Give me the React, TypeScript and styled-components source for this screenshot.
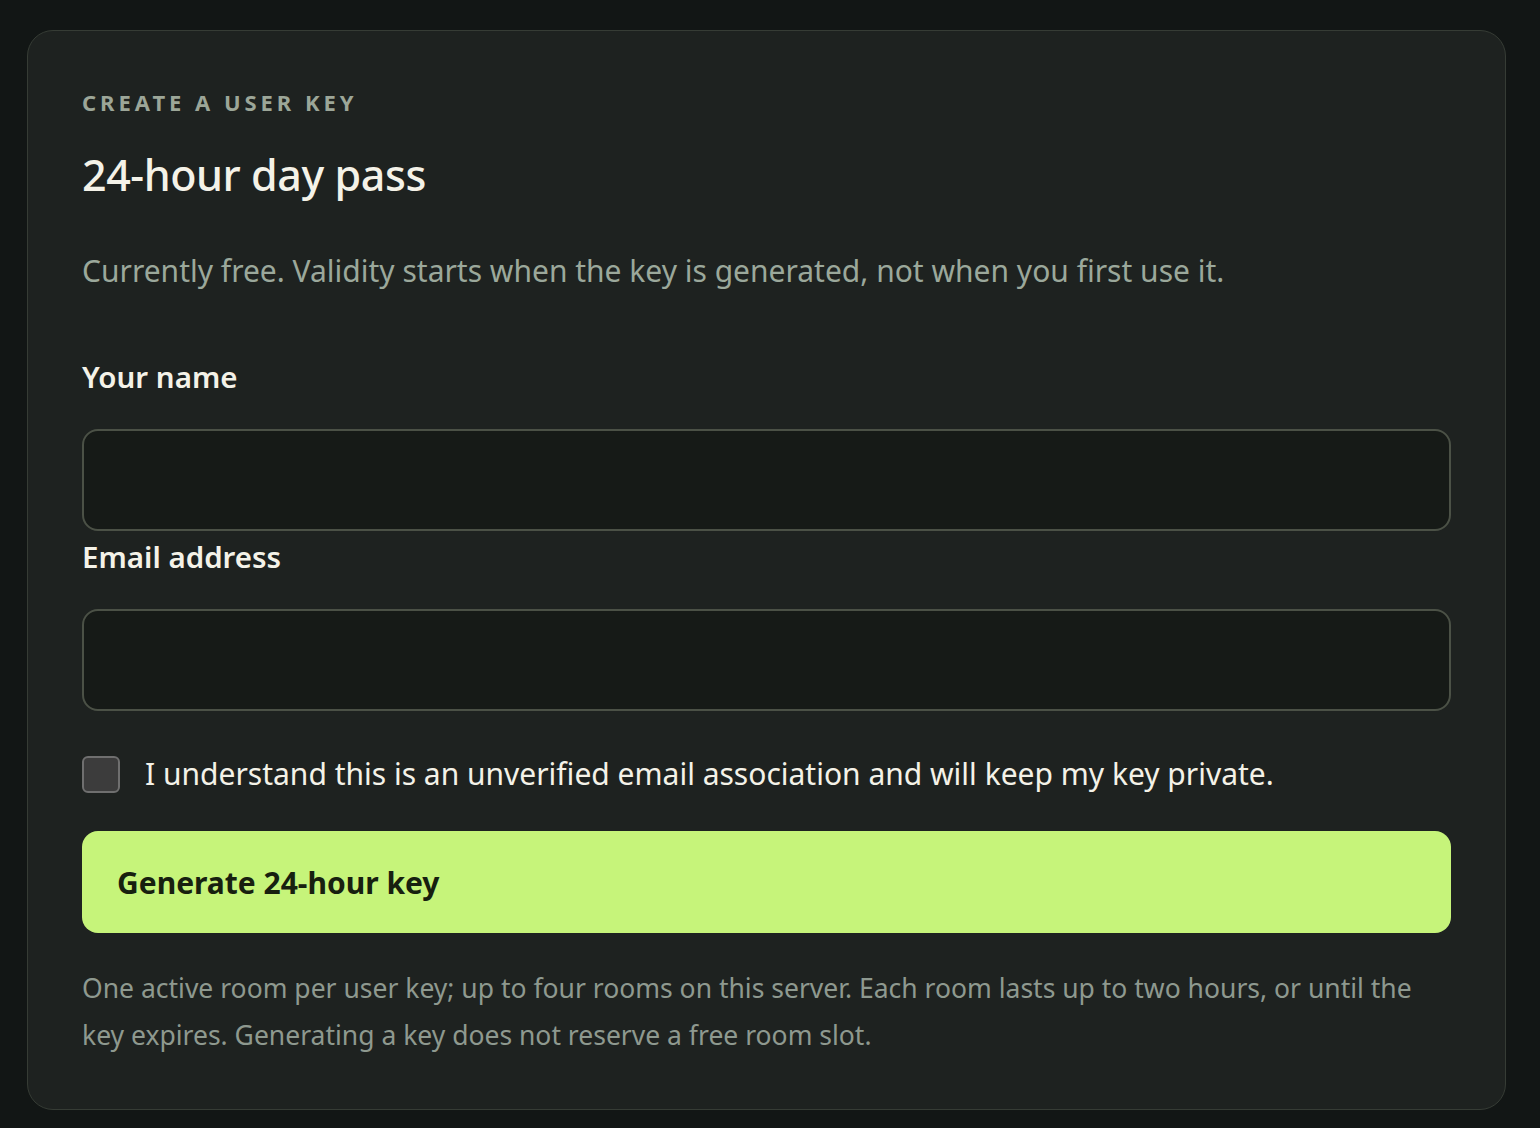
import React from "react";
import styled, { createGlobalStyle } from "styled-components";

const Global = createGlobalStyle`
  html, body { margin: 0; padding: 0; background: #121615; }
  body { font-family: "Noto Sans", "Open Sans", sans-serif; }
  * { box-sizing: border-box; }
`;

const Page = styled.main`
  min-height: 1128px;
  padding: 30px 34px 18px 27px;
  background: #121615;
`;

const Card = styled.section`
  width: 1479px;
  background: #1e2220;
  border: 1.5px solid #363c35;
  border-radius: 26px;
  padding: 57px 54px 50px 54px;
  display: flex;
  flex-direction: column;
`;

const Eyebrow = styled.p`
  margin: 0;
  font-size: 22px;
  line-height: 28px;
  font-weight: 700;
  letter-spacing: 0.18em;
  text-transform: uppercase;
  color: #9ca698;
`;

const Title = styled.h1`
  margin: 33px 0 0;
  font-size: 43px;
  line-height: 52px;
  font-weight: 500;
  color: #f4f2e8;
  letter-spacing: -0.01em;
`;

const Lead = styled.p`
  margin: 50px 0 0;
  font-size: 30px;
  line-height: 40px;
  color: #9ba89b;
`;

const Fields = styled.div`
  margin-top: 66px;
  display: flex;
  flex-direction: column;
  gap: 6px;
`;

const Field = styled.label`
  display: flex;
  flex-direction: column;
  gap: 32px;
`;

const FieldLabel = styled.span`
  font-size: 29.5px;
  line-height: 40px;
  font-weight: 600;
  color: #f4f2e8;
`;

const Input = styled.input`
  height: 102px;
  width: 100%;
  background: #161a17;
  border: 2px solid #4b5146;
  border-radius: 16px;
  color: #f4f2e8;
  font: inherit;
  font-size: 28px;
  padding: 0 28px;
  outline: none;
`;

const CheckRow = styled.label`
  margin-top: 43px;
  display: flex;
  align-items: center;
  gap: 25px;
  cursor: pointer;
`;

const Box = styled.input`
  appearance: none;
  margin: 0;
  width: 38px;
  height: 37px;
  flex: none;
  background: #3c3c3c;
  border: 2px solid #6f6f6f;
  border-radius: 6px;
`;

const CheckText = styled.span`
  font-size: 30px;
  line-height: 40px;
  color: #f4f2e8;
`;

const Button = styled.button`
  margin-top: 37px;
  height: 102px;
  width: 100%;
  border: none;
  border-radius: 16px;
  background: #c6f47a;
  color: #17200f;
  font: inherit;
  font-size: 30px;
  font-weight: 700;
  text-align: left;
  padding: 0 35px;
  cursor: pointer;
`;

const Note = styled.p`
  margin: 32px 0 0;
  font-size: 26.5px;
  line-height: 47px;
  color: #8e998f;
`;

export default function App() {
  return (
    <Page>
      <Global />
      <Card>
        <Eyebrow>Create a user key</Eyebrow>
        <Title>24-hour day pass</Title>
        <Lead>Currently free. Validity starts when the key is generated, not when you first use it.</Lead>
        <Fields>
          <Field>
            <FieldLabel>Your name</FieldLabel>
            <Input type="text" />
          </Field>
          <Field>
            <FieldLabel>Email address</FieldLabel>
            <Input type="email" />
          </Field>
        </Fields>
        <CheckRow>
          <Box type="checkbox" />
          <CheckText>I understand this is an unverified email association and will keep my key private.</CheckText>
        </CheckRow>
        <Button type="button">Generate 24-hour key</Button>
        <Note>
          One active room per user key; up to four rooms on this server. Each room lasts up to two hours, or until the
          key expires. Generating a key does not reserve a free room slot.
        </Note>
      </Card>
    </Page>
  );
}
